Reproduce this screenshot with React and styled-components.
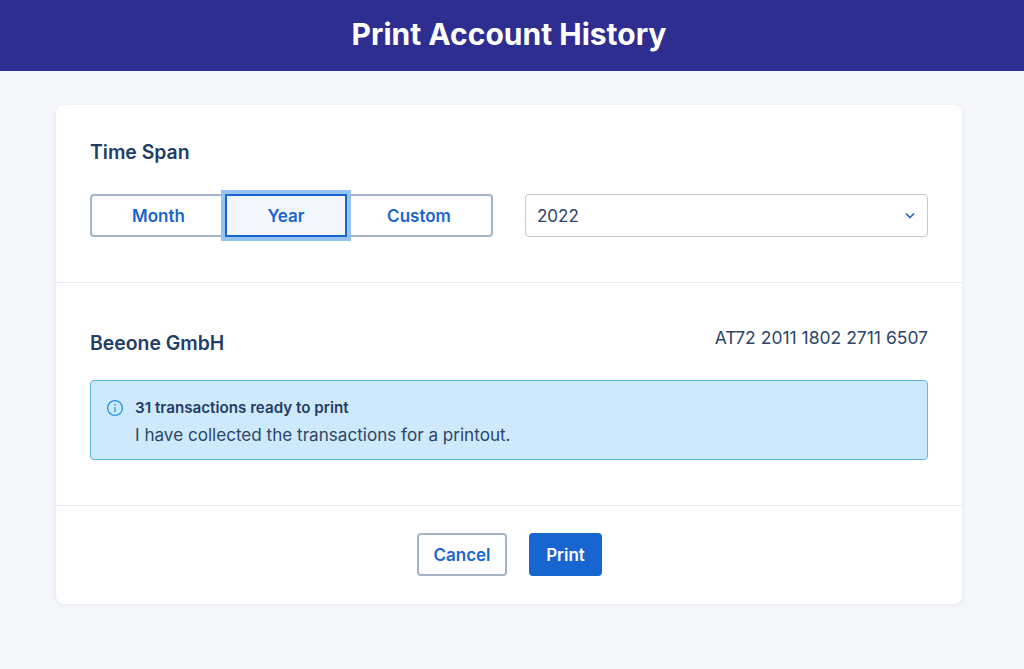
import React from 'react';
import styled, { createGlobalStyle } from 'styled-components';

const GlobalStyle = createGlobalStyle`
  html, body {
    margin: 0;
    padding: 0;
    background: #f4f6f9;
    font-family: Inter, "Noto Sans", sans-serif;
  }
  * {
    box-sizing: border-box;
  }
`;

const Page = styled.div`
  width: 1024px;
  height: 669px;
  overflow: hidden;
`;
const TopBar = styled.header`
  height: 71px;
  background: #2e2e90;
  display: flex;
  align-items: center;
  justify-content: center;
`;
const Title = styled.h1`
  margin: 0 0 3px -6px;
  color: #fff;
  font-size: 30px;
  font-weight: 700;
`;
const Card = styled.main`
  width: 906px;
  margin: 34px 0 0 56px;
  background: #fff;
  border-radius: 8px;
  box-shadow: 0 1px 4px rgba(30, 50, 90, 0.08);
`;
const Section = styled.section`
  padding: ${(p) => p.$padding};
  border-bottom: ${(p) => (p.$last ? 'none' : '1px solid #e9ecf1')};
`;
const SectionTitle = styled.h2`
  margin: ${(p) => p.$margin || 0};
  color: #1f3d66;
  font-size: 19.4px;
  line-height: 22px;
  font-weight: 600;
`;
const SpanRow = styled.div`
  display: flex;
  gap: 32px;
  margin-top: 31px;
`;
const Segments = styled.div`
  display: flex;
  width: 403px;
  height: 43px;
  border: 2px solid #a5b4c7;
  border-radius: 4px;
`;
const Segment = styled.button`
  position: relative;
  flex: ${(p) => p.$flex};
  margin: ${(p) => (p.$active ? '-2px 0' : '0')};
  padding: 0;
  border: ${(p) => (p.$active ? '2px solid #1766d0' : 'none')};
  outline: ${(p) => (p.$active ? '4px solid #96c3f0' : 'none')};
  background: ${(p) => (p.$active ? '#f3f7fd' : 'transparent')};
  color: #1a66cc;
  font: 600 17px Inter, sans-serif;
  z-index: ${(p) => (p.$active ? 1 : 0)};
`;
const Select = styled.div`
  flex: 1;
  height: 43px;
  display: flex;
  align-items: center;
  justify-content: space-between;
  padding: 0 12px 0 11px;
  border: 1px solid #c4cad4;
  border-radius: 4px;
  color: #2c4568;
  font-size: 17px;
`;
const AccountRow = styled.div`
  display: flex;
  justify-content: space-between;
  align-items: flex-start;
`;
const Iban = styled.div`
  color: #2c4568;
  font-size: 17.5px;
  line-height: 20px;
`;
const Notice = styled.div`
  display: flex;
  gap: 11px;
  height: 80px;
  margin-top: 26px;
  padding: 17px 15px 0;
  background: #cfe9fc;
  border: 1px solid #62b5e5;
  border-radius: 4px;
  color: #1f3d66;
`;
const NoticeIcon = styled.svg`
  flex: none;
  margin-top: 1px;
`;
const NoticeTitle = styled.div`
  font-size: 15.2px;
  line-height: 20px;
  font-weight: 600;
`;
const NoticeText = styled.div`
  margin-top: 7px;
  color: #2c4568;
  font-size: 17.1px;
  line-height: 20px;
`;
const Actions = styled.div`
  display: flex;
  justify-content: center;
  gap: 22px;
  padding-left: 1px;
`;
const Button = styled.button`
  height: 43px;
  width: ${(p) => p.$width};
  padding: 0;
  border: ${(p) => (p.$primary ? 'none' : '2px solid #a5b4c7')};
  border-radius: 4px;
  background: ${(p) => (p.$primary ? '#1766d0' : '#fff')};
  color: ${(p) => (p.$primary ? '#fff' : '#1a66cc')};
  font: 600 17px Inter, sans-serif;
`;

export default function App() {
  return (
    <Page>
      <GlobalStyle />
      <TopBar>
        <Title>Print Account History</Title>
      </TopBar>
      <Card>
        <Section $padding="36px 34px 45px">
          <SectionTitle>Time Span</SectionTitle>
          <SpanRow>
            <Segments>
              <Segment $flex="0 0 133px">Month</Segment>
              <Segment $flex="0 0 122px" $active>Year</Segment>
              <Segment $flex="1">Custom</Segment>
            </Segments>
            <Select>
              2022
              <svg width="10" height="7" viewBox="0 0 10 7" fill="none">
                <path d="M1 1.5l4 4 4-4" stroke="#2a68b8" strokeWidth="1.7" />
              </svg>
            </Select>
          </SpanRow>
        </Section>
        <Section $padding="45px 34px 45px">
          <AccountRow>
            <SectionTitle as="h3" $margin="4px 0 0">Beeone GmbH</SectionTitle>
            <Iban>AT72 2011 1802 2711 6507</Iban>
          </AccountRow>
          <Notice>
            <NoticeIcon width="18" height="18" viewBox="0 0 18 18" fill="none">
              <circle cx="9" cy="9" r="7.4" stroke="#1e96e8" strokeWidth="1.3" />
              <path d="M9 8v5" stroke="#1e96e8" strokeWidth="1.3" />
              <circle cx="9" cy="5.6" r="0.85" fill="#1e96e8" />
            </NoticeIcon>
            <div>
              <NoticeTitle>31 transactions ready to print</NoticeTitle>
              <NoticeText>I have collected the transactions for a printout.</NoticeText>
            </div>
          </Notice>
        </Section>
        <Section $padding="27px 34px 28px" $last>
          <Actions>
            <Button $width="90px">Cancel</Button>
            <Button $width="73px" $primary>Print</Button>
          </Actions>
        </Section>
      </Card>
    </Page>
  );
}
